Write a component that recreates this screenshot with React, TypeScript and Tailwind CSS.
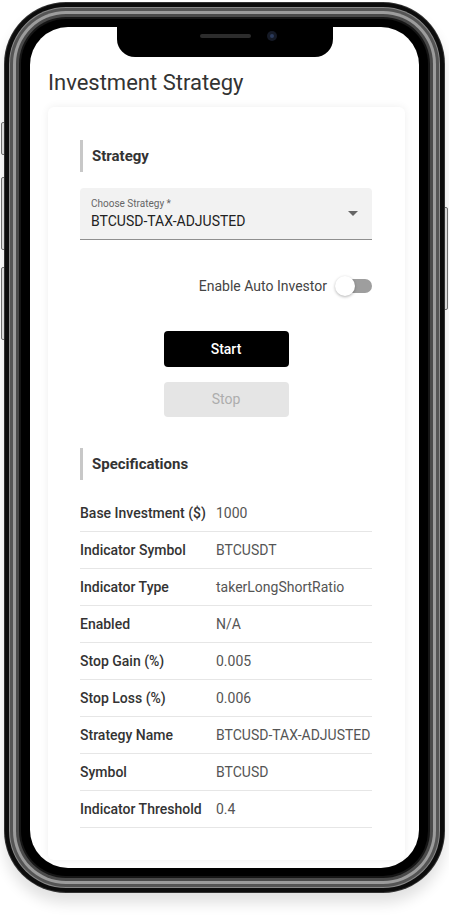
import React from "react";

const specs = [
  ["Base Investment ($)", "1000"],
  ["Indicator Symbol", "BTCUSDT"],
  ["Indicator Type", "takerLongShortRatio"],
  ["Enabled", "N/A"],
  ["Stop Gain (%)", "0.005"],
  ["Stop Loss (%)", "0.006"],
  ["Strategy Name", "BTCUSD-TAX-ADJUSTED"],
  ["Symbol", "BTCUSD"],
  ["Indicator Threshold", "0.4"],
];

function SectionTitle({ children }: { children: React.ReactNode }) {
  return (
    <div className="flex h-[32px] items-center border-l-[3px] border-[#c8c8c8] pl-[9px]">
      <span className="text-[15px] font-bold text-[#333]">{children}</span>
    </div>
  );
}

export default function App() {
  return (
    <div
      className="relative h-[920px] w-[449px] overflow-hidden bg-white pl-[4px] pt-[2px]"
      style={{ fontFamily: "Roboto, 'Liberation Sans', sans-serif" }}
    >
      {/* side buttons */}
      <div className="absolute left-[1px] top-[122px] h-[33px] w-[5px] rounded-l-[2px] border border-[#777] bg-[#e4e4e4]" />
      <div className="absolute left-[1px] top-[177px] h-[73px] w-[5px] rounded-l-[2px] border border-[#777] bg-[#e4e4e4]" />
      <div className="absolute left-[1px] top-[267px] h-[73px] w-[5px] rounded-l-[2px] border border-[#777] bg-[#e4e4e4]" />
      <div className="absolute left-[443px] top-[207px] h-[103px] w-[5px] rounded-r-[2px] border border-[#777] bg-[#e4e4e4]" />

      {/* phone frame */}
      <div className="relative h-[891px] w-[441px] rounded-[62px] bg-[#333] p-[1px] shadow-[0_10px_14px_rgba(0,0,0,0.12)]">
        <div className="h-full w-full rounded-[61px] bg-[#0c0c0c] p-[4px]">
          <div className="h-full w-full rounded-[57px] bg-[#8a8a8a] p-[1px]">
            <div className="h-full w-full rounded-[56px] bg-[#555] p-[3px]">
              <div className="h-full w-full rounded-[53px] bg-[#9c9c9c] p-[3px]">
                <div className="h-full w-full rounded-[50px] bg-[#4a4a4a] p-[3px]">
                  <div className="h-full w-full rounded-[47px] bg-[#161616] p-[2px]">
                    <div className="h-full w-full rounded-[45px] bg-black px-[9px] py-[8px]">
                      {/* screen */}
                      <div className="relative h-full w-full overflow-hidden rounded-[38px] bg-white">
                        {/* notch */}
                        <div className="absolute left-[87px] top-0 h-[30px] w-[216px] rounded-b-[18px] bg-black">
                          <div className="absolute left-[83px] top-[7px] h-[4px] w-[51px] rounded-full bg-[#2c2c2c]" />
                          <div className="absolute left-[150px] top-[4px] flex h-[10px] w-[10px] items-center justify-center rounded-full bg-[#151a26]">
                            <div className="h-[4px] w-[4px] rounded-full bg-[#2b3a5c]" />
                          </div>
                        </div>

                        <div className="pl-[18px] pt-[42px]">
                          <h1 className="text-[22px] font-normal leading-[28px] text-[#333]">
                            Investment Strategy
                          </h1>

                          <div className="mt-[10px] w-[357px] rounded-[6px] bg-white pb-[32px] pl-[32px] pr-[33px] pt-[33px] shadow-[0_0_8px_rgba(0,0,0,0.07)]">
                            <SectionTitle>Strategy</SectionTitle>

                            {/* select */}
                            <div className="mt-[16px] flex h-[52px] items-center justify-between rounded-t-[4px] border-b border-[#8f8f8f] bg-[#f2f2f2] pl-[11px] pr-[14px]">
                              <div className="pt-[1px]">
                                <div className="text-[10px] leading-[12px] text-[#666]">
                                  Choose Strategy *
                                </div>
                                <div className="mt-[1px] text-[14px] leading-[20px] text-[#222]">
                                  BTCUSD-TAX-ADJUSTED
                                </div>
                              </div>
                              <div className="h-0 w-0 border-l-[5px] border-r-[5px] border-t-[5px] border-l-transparent border-r-transparent border-t-[#666]" />
                            </div>

                            {/* toggle */}
                            <div className="mt-[36px] flex h-[20px] items-center justify-end gap-[8px]">
                              <span className="text-[14px] text-[#444]">Enable Auto Investor</span>
                              <div className="relative h-[20px] w-[37px]">
                                <div className="absolute left-[2px] right-0 top-[3px] h-[14px] rounded-full bg-[#9e9e9e]" />
                                <div className="absolute left-0 top-0 h-[20px] w-[20px] rounded-full bg-white shadow-[0_1px_3px_rgba(0,0,0,0.3)]" />
                              </div>
                            </div>

                            {/* buttons */}
                            <div className="mt-[35px] flex flex-col items-center gap-[15px]">
                              <button className="h-[36px] w-[125px] rounded-[4px] bg-black text-[14px] font-medium text-white">
                                Start
                              </button>
                              <button className="h-[35px] w-[125px] rounded-[4px] bg-[#e5e5e5] text-[14px] text-[#adadad]">
                                Stop
                              </button>
                            </div>

                            <div className="mt-[31px]">
                              <SectionTitle>Specifications</SectionTitle>
                            </div>

                            {/* table */}
                            <div className="mt-[15px]">
                              {specs.map(([label, value]) => (
                                <div
                                  key={label}
                                  className="grid h-[37px] grid-cols-[136px_1fr] items-center border-b border-[#e6e6e6] text-[14px]"
                                >
                                  <span className="font-medium text-[#333]">{label}</span>
                                  <span className="whitespace-nowrap text-[#555]">{value}</span>
                                </div>
                              ))}
                            </div>
                          </div>
                        </div>
                      </div>
                    </div>
                  </div>
                </div>
              </div>
            </div>
          </div>
        </div>
      </div>
    </div>
  );
}
